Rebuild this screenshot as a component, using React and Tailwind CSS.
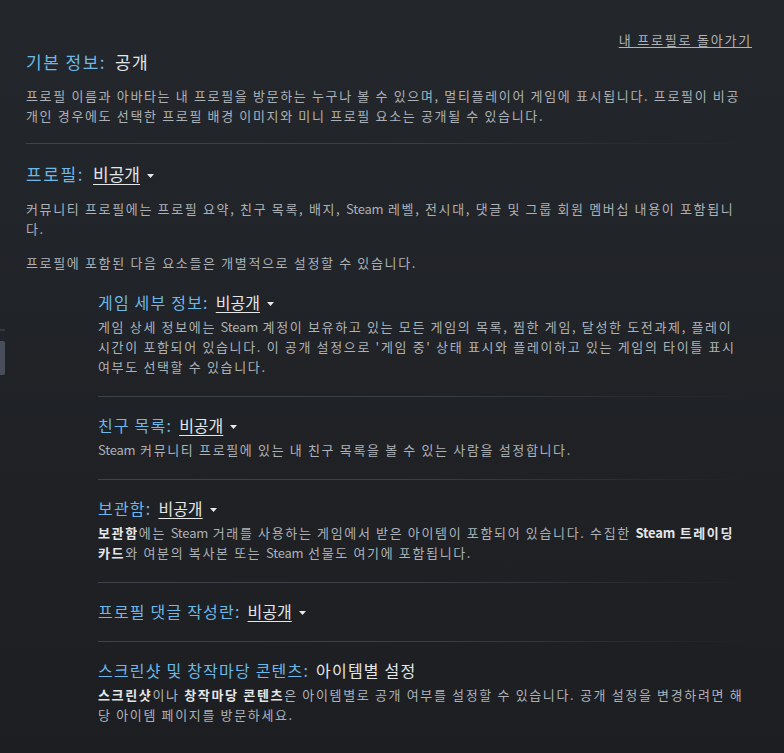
import React from 'react'

const font = { fontFamily: '"Noto Sans CJK KR", "Noto Sans", sans-serif' }

// 라틴 문자는 자간을 좁게
const S = ({ children = 'Steam' }) => <span className="tracking-[-0.2px]">{children}</span>

// 드롭다운 값 (밑줄 + 작은 삼각형)
const Dropdown = ({ value }) => (
  <span className="inline-flex items-center tracking-normal text-[#e4e6e8]">
    <span className="underline underline-offset-[3px] decoration-1">{value}</span>
    <svg width="7" height="4" viewBox="0 0 7 4" className="ml-[7px] mt-[4px]">
      <path d="M0 0 L7 0 L3.5 4 Z" fill="#e8e8e8" />
    </svg>
  </span>
)

const Separator = () => (
  <div className="h-px w-full bg-gradient-to-r from-[#3e434c] via-[#3a3f47] to-transparent" />
)

const SubItem = ({ title, value, children, last }) => (
  <div className={last ? 'pt-[17px]' : 'pt-[17px] pb-[19px]'}>
    <div className="flex items-center gap-[7px] text-[16px] leading-[22px] text-[#6cb8e8]">
      <span className="tracking-[1.2px]">{title}:</span>
      {value}
    </div>
    {children && (
      <p className="mt-[4px] text-[13px] leading-[20px] tracking-[1.65px] text-[#acb2b8]">{children}</p>
    )}
  </div>
)

const App = () => {
  return (
    <div
      className="relative min-h-[753px] w-full bg-gradient-to-b from-[#23272c] to-[#1d1e21]"
      style={font}
    >
      {/* 왼쪽 가장자리의 잘린 요소 */}
      <div className="absolute left-0 top-[329px] h-[2px] w-[5px] bg-[#35383f]" />
      <div className="absolute left-0 top-[341px] h-[34px] w-[5px] rounded-r-[2px] bg-[#4a4e5a]" />

      <div className="pl-[26px] pr-[32px] pt-[31px]">
        <div className="flex justify-end">
          <a className="text-[13px] leading-[18px] tracking-[1.8px] text-[#b0b3b6] underline underline-offset-2">
            내 프로필로 돌아가기
          </a>
        </div>

        {/* 기본 정보 */}
        <div className="mt-px flex items-center gap-[9px] text-[17px] leading-[24px] text-[#6cb8e8]">
          <span className="tracking-[1.5px]">기본 정보:</span>
          <span className="tracking-[1.2px] text-[#e4e6e8]">공개</span>
        </div>
        <p className="mt-[12px] text-[13px] leading-[20px] tracking-[1.65px] text-[#acb2b8]">
          프로필 이름과 아바타는 내 프로필을 방문하는 누구나 볼 수 있으며, 멀티플레이어 게임에 표시됩니다. 프로필이 비공개인 경우에도 선택한 프로필 배경 이미지와 미니 프로필 요소는 공개될 수 있습니다.
        </p>
        <div className="mt-[17px]">
          <Separator />
        </div>

        {/* 프로필 */}
        <div className="mt-[18px] flex items-center gap-[9px] text-[17px] leading-[24px] text-[#6cb8e8]">
          <span className="tracking-[1.6px]">프로필:</span>
          <span className="tracking-[1px]">
            <Dropdown value="비공개" />
          </span>
        </div>
        <p className="mt-[13px] text-[13px] leading-[20px] tracking-[1.65px] text-[#acb2b8]">
          커뮤니티 프로필에는 프로필 요약, 친구 목록, 배지, <S /> 레벨, 전시대, 댓글 및 그룹 회원 멤버십 내용이 포함됩니다.
        </p>
        <p className="mt-[14px] text-[13px] leading-[20px] tracking-[1.65px] text-[#acb2b8]">
          프로필에 포함된 다음 요소들은 개별적으로 설정할 수 있습니다.
        </p>

        <div className="ml-[72px] mr-[4px] mt-px">
          <SubItem title="게임 세부 정보" value={<Dropdown value="비공개" />}>
            게임 상세 정보에는 <S /> 계정이 보유하고 있는 모든 게임의 목록, 찜한 게임, 달성한 도전과제, 플레이 시간이 포함되어 있습니다. 이 공개 설정으로 '게임 중' 상태 표시와 플레이하고 있는 게임의 타이틀 표시 여부도 선택할 수 있습니다.
          </SubItem>
          <Separator />
          <SubItem title="친구 목록" value={<Dropdown value="비공개" />}>
            <S /> 커뮤니티 프로필에 있는 내 친구 목록을 볼 수 있는 사람을 설정합니다.
          </SubItem>
          <Separator />
          <SubItem title="보관함" value={<Dropdown value="비공개" />}>
            <b className="font-bold text-[#e4e6e8]">보관함</b>에는 <S /> 거래를 사용하는 게임에서 받은 아이템이 포함되어 있습니다. 수집한{' '}
            <b className="font-bold text-[#e4e6e8]">
              <S /> 트레이딩 카드
            </b>
            와 여분의 복사본 또는 <S /> 선물도 여기에 포함됩니다.
          </SubItem>
          <Separator />
          <SubItem title="프로필 댓글 작성란" value={<Dropdown value="비공개" />} />
          <Separator />
          <SubItem
            title="스크린샷 및 창작마당 콘텐츠"
            value={<span className="tracking-[1.2px] text-[#e4e6e8]">아이템별 설정</span>}
            last
          >
            <b className="font-bold text-[#e4e6e8]">스크린샷</b>이나 <b className="font-bold text-[#e4e6e8]">창작마당 콘텐츠</b>은 아이템별로 공개 여부를 설정할 수 있습니다. 공개 설정을 변경하려면 해당 아이템 페이지를 방문하세요.
          </SubItem>
        </div>
      </div>
    </div>
  )
}

export default App
